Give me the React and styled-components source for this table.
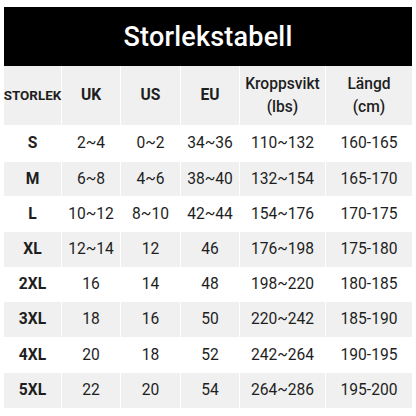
import React from 'react';
import styled, { createGlobalStyle } from 'styled-components';

const GlobalStyle = createGlobalStyle`
  body {
    margin: 0;
    background: #ffffff;
    font-family: Roboto, "Liberation Sans", sans-serif;
    color: #1e1e1e;
  }
`;

const Page = styled.div`
  width: 416px;
  height: 416px;
  padding: 7px 4px 0;
  box-sizing: border-box;
`;

const Title = styled.div`
  height: 59px;
  background: #000000;
  color: #ffffff;
  display: flex;
  align-items: center;
  justify-content: center;
  font-size: 27px;
  font-weight: 500;
  letter-spacing: 0.2px;
`;

const Table = styled.div`
  display: grid;
  grid-template-columns: 58px 59px 60px 59px 86px 86px;
`;

const Row = styled.div`
  display: contents;
`;

const Cell = styled.div`
  height: ${p => p.$h}px;
  background: ${p => (p.$shade ? '#f0f0f0' : '#ffffff')};
  border-right: 1px solid #ffffff;
  box-sizing: border-box;
  display: flex;
  align-items: center;
  justify-content: center;
  text-align: center;
  font-size: ${p => (p.$small ? '13.4px' : '15.6px')};
  font-weight: ${p => p.$weight || 400};
  line-height: 1.45;
  white-space: nowrap;
  &:last-child {
    border-right: none;
  }
`;

const head = [
  { t: 'STORLEK', w: 700, small: true },
  { t: 'UK', w: 700 },
  { t: 'US', w: 700 },
  { t: 'EU', w: 700 },
  { t: <>Kroppsvikt<br />(lbs)</>, w: 500 },
  { t: <>Längd<br />(cm)</>, w: 500 },
];

const rows = [
  ['S', '2~4', '0~2', '34~36', '110~132', '160-165'],
  ['M', '6~8', '4~6', '38~40', '132~154', '165-170'],
  ['L', '10~12', '8~10', '42~44', '154~176', '170-175'],
  ['XL', '12~14', '12', '46', '176~198', '175-180'],
  ['2XL', '16', '14', '48', '198~220', '180-185'],
  ['3XL', '18', '16', '50', '220~242', '185-190'],
  ['4XL', '20', '18', '52', '242~264', '190-195'],
  ['5XL', '22', '20', '54', '264~286', '195-200'],
];

const heights = [37, 34, 36, 35, 35, 35, 36, 35];

export default function App() {
  return (
    <>
      <GlobalStyle />
      <Page>
        <Title>Storlekstabell</Title>
        <Table>
          <Row>
            {head.map((h, i) => (
              <Cell key={i} $h={59} $shade $weight={h.w} $small={h.small}>
                {h.t}
              </Cell>
            ))}
          </Row>
          {rows.map((r, ri) => (
            <Row key={r[0]}>
              {r.map((v, ci) => (
                <Cell key={ci} $h={heights[ri]} $shade={ri % 2 === 1} $weight={ci === 0 ? 700 : 400}>
                  {v}
                </Cell>
              ))}
            </Row>
          ))}
        </Table>
      </Page>
    </>
  );
}
